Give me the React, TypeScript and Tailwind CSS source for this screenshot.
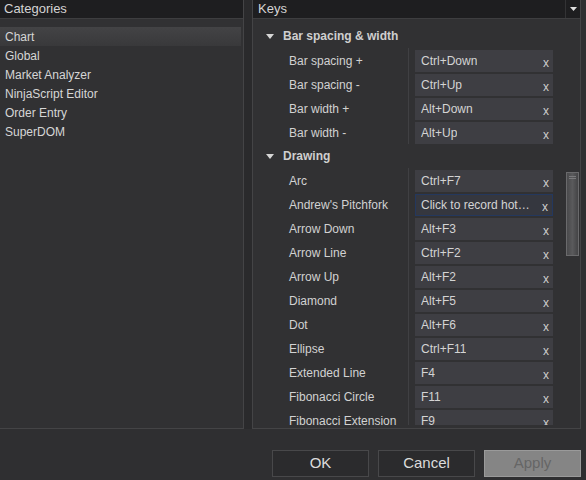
import React from "react";

type KeyRow = { label: string; value: string; focused?: boolean };

const barRows: KeyRow[] = [
  { label: "Bar spacing +", value: "Ctrl+Down" },
  { label: "Bar spacing -", value: "Ctrl+Up" },
  { label: "Bar width +", value: "Alt+Down" },
  { label: "Bar width -", value: "Alt+Up" },
];

const drawingRows: KeyRow[] = [
  { label: "Arc", value: "Ctrl+F7" },
  { label: "Andrew's Pitchfork", value: "Click to record hot…", focused: true },
  { label: "Arrow Down", value: "Alt+F3" },
  { label: "Arrow Line", value: "Ctrl+F2" },
  { label: "Arrow Up", value: "Alt+F2" },
  { label: "Diamond", value: "Alt+F5" },
  { label: "Dot", value: "Alt+F6" },
  { label: "Ellipse", value: "Ctrl+F11" },
  { label: "Extended Line", value: "F4" },
  { label: "Fibonacci Circle", value: "F11" },
  { label: "Fibonacci Extension", value: "F9" },
];

const categories = ["Chart", "Global", "Market Analyzer", "NinjaScript Editor", "Order Entry", "SuperDOM"];

function Caret() {
  return (
    <svg width="8" height="5" viewBox="0 0 8 5" className="shrink-0">
      <path d="M0 0 H8 L4 5 Z" fill="#d6d6d6" />
    </svg>
  );
}

function GroupHeader({ title }: { title: string }) {
  return (
    <div className="flex h-6 items-center pl-[13px]">
      <Caret />
      <span className="ml-[9px] text-[12px] font-bold text-[#cfcfcf]">{title}</span>
    </div>
  );
}

function Row({ row }: { row: KeyRow }) {
  return (
    <div className="flex h-6 items-start">
      <div className="flex h-6 w-[155px] shrink-0 items-center pt-[2px] pl-[36px] text-[12px] text-[#d2d2d2]">
        {row.label}
      </div>
      <div className="h-6 w-px shrink-0 bg-[#404043]" />
      <div className="pl-[6px] pt-[2px]">
        <div
          className={
            "flex h-[22px] w-[138px] items-center justify-between pr-[4px] text-[12px] text-[#d4d4d4] " +
            (row.focused ? "border border-[#24385e] bg-[#35373f] pl-[5px]" : "bg-[#3e3e43] pl-[6px]")
          }
        >
          <span className="truncate whitespace-nowrap">{row.value}</span>
          <span className="mt-[3px] text-[12px] text-[#cdcdcd]">x</span>
        </div>
      </div>
    </div>
  );
}

export default function App() {
  return (
    <div
      className="relative flex h-[480px] w-[586px] flex-col overflow-hidden bg-[#2f2f31]"
      style={{ fontFamily: '"Liberation Sans", Arial, sans-serif' }}
    >
      <div className="flex h-[429px]">
        {/* Categories */}
        <div className="flex w-[244px] flex-col border-r border-b border-[#444446] bg-[#313133]">
          <div className="flex h-[19px] items-center border-b border-[#3e3e40] bg-[#1e1e20] pl-[4px] text-[13px] text-[#d4d4d4]">
            Categories
          </div>
          <div className="pt-[8px]">
            {categories.map((c, i) => (
              <div
                key={c}
                className={
                  "flex h-[19px] items-center pl-[5px] text-[12px] text-[#d6d6d6] " +
                  (i === 0 ? "mr-[2px] bg-gradient-to-b from-[#434345] to-[#39393b]" : "")
                }
              >
                {c}
              </div>
            ))}
          </div>
        </div>

        <div className="w-[8px] bg-[#2a2a2c]" />

        {/* Keys */}
        <div className="flex w-[329px] flex-col border-x border-b border-[#444446] bg-[#313133]">
          <div className="flex h-[19px] border-b border-[#3e3e40] bg-[#1e1e20]">
            <div className="flex flex-1 items-center border-r border-[#333335] pl-[5px] text-[13px] text-[#d4d4d4]">
              Keys
            </div>
            <div className="flex w-[14px] items-center justify-center">
              <svg width="7" height="4" viewBox="0 0 7 4">
                <path d="M0 0 H7 L3.5 4 Z" fill="#e0e0e0" />
              </svg>
            </div>
          </div>
          <div className="relative min-h-0 flex-1 pb-[3px]">
            <div className="h-full overflow-hidden pt-[5px]">
              <GroupHeader title="Bar spacing & width" />
              {barRows.map((r) => (
                <Row key={r.label} row={r} />
              ))}
              <GroupHeader title="Drawing" />
              {drawingRows.map((r) => (
                <Row key={r.label} row={r} />
              ))}
            </div>
            {/* scrollbar thumb */}
            <div className="absolute top-[153px] right-[1px] h-[84px] w-[13px] border border-[#6a6a6c] bg-gradient-to-r from-[#4a4a4c] via-[#5a5a5c] to-[#444446]">
              <div className="mx-auto mt-[3px] h-px w-[7px] bg-[#7a7a7c]" />
              <div className="mx-auto mt-[1px] h-px w-[7px] bg-[#7a7a7c]" />
            </div>
          </div>
        </div>
      </div>

      {/* Buttons */}
      <div className="flex gap-[9px] pt-[21px] pl-[272px]">
        <button className="h-[27px] w-[97px] border border-[#48484a] bg-[#2b2b2d] text-[15px] text-[#dcdcdc]">
          OK
        </button>
        <button className="h-[27px] w-[97px] border border-[#48484a] bg-[#2b2b2d] text-[15px] text-[#dcdcdc]">
          Cancel
        </button>
        <button className="h-[27px] w-[97px] border border-[#9a9a9a] bg-[#858585] text-[15px] text-[#666666]">
          Apply
        </button>
      </div>
    </div>
  );
}
